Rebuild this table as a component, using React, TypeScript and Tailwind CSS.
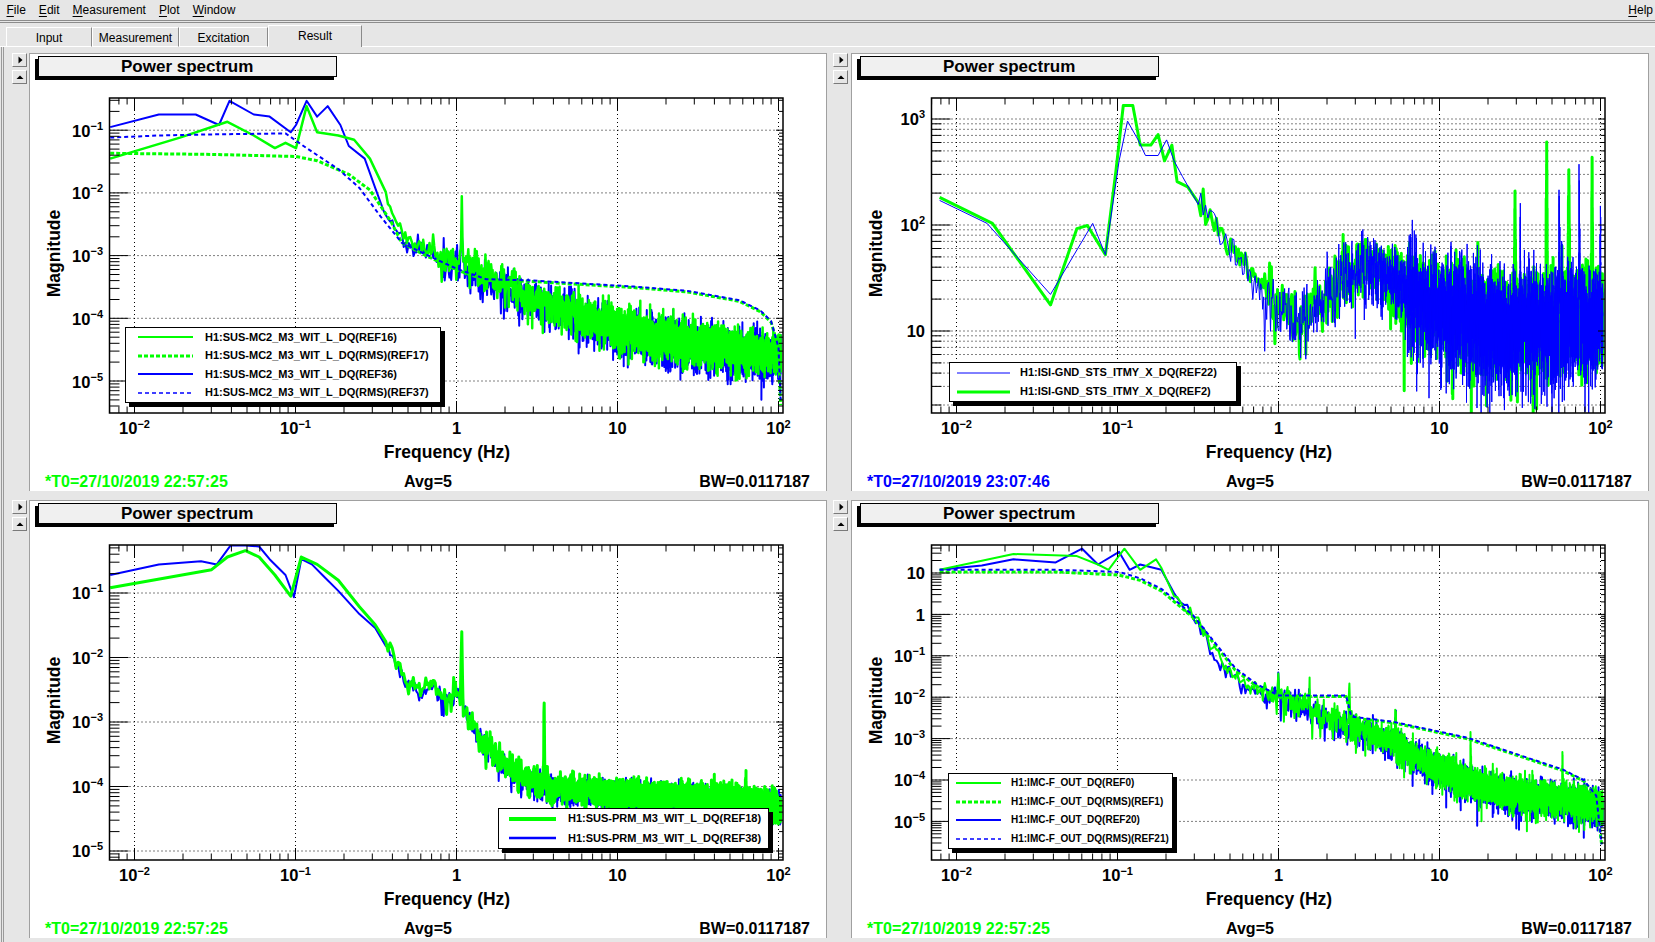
import React from "react";

type Pt = [number, number];

const FONT = "'Liberation Sans', Arial, Helvetica, sans-serif";
const GREEN = "#00ff00";
const BLUE = "#0000ff";

// frame geometry (svg coords)
const FX0 = 79.5;
const FX1 = 753;
const FY0 = 17;
const FY1 = 332;
const XMIN = -2 + (FX0 - 104.5) / 161;
const XMAX = -2 + (FX1 - 104.5) / 161;
const sx = (lf: number) => 104.5 + (lf + 2) * 161;

function rng(seed: number) {
  let s = seed >>> 0;
  return () => {
    s = (Math.imul(s, 1664525) + 1013904223) >>> 0;
    return s / 4294967296;
  };
}

function interp(pts: Pt[], x: number) {
  if (x <= pts[0][0]) return pts[0][1];
  for (let i = 1; i < pts.length; i++) {
    if (x <= pts[i][0]) {
      const [x0, y0] = pts[i - 1];
      const [x1, y1] = pts[i];
      return y0 + ((y1 - y0) * (x - x0)) / (x1 - x0 || 1);
    }
  }
  return pts[pts.length - 1][1];
}

interface NoiseOpts {
  head: Pt[];
  base: Pt[];
  sigma: (lf: number) => number;
  seed: number;
  spikes?: [number, number, number][];
  end?: number;
}

function noisy(o: NoiseOpts): Pt[] {
  const r = rng(o.seed);
  const out: Pt[] = [...o.head];
  const base: Pt[] = [o.head[o.head.length - 1], ...o.base];
  let f = Math.pow(10, base[0][0]);
  const fEnd = Math.pow(10, o.end ?? 2.015);
  const spikes = (o.spikes ?? []).map(([lf, peak, w]) => [lf, peak - interp(base, lf), w]);
  for (;;) {
    f += Math.max(0.0117187, (f * Math.LN10) / 2800);
    if (f > fEnd) break;
    const lf = Math.log10(f);
    let y = interp(base, lf);
    const s = o.sigma(lf);
    const u1 = Math.max(r(), 1e-9);
    const u2 = r();
    let g = Math.sqrt(-2 * Math.log(u1)) * Math.cos(2 * Math.PI * u2);
    if (g < 0) g *= 1.3;
    const p = r();
    if (p < 0.009) g -= 1.5 + 2 * r();
    else if (p < 0.013) g += 1 + 1.5 * r();
    y += g * s;
    for (const [slf, h, w] of spikes) {
      const d = Math.abs(lf - slf);
      if (d < w) y += h * (1 - d / w);
    }
    out.push([lf, y]);
  }
  return out;
}

// display-reading converters
const LX = (d: number) => (d - 432) / 152.5;
const RX = (d: number) => (d - 1211) / 152.5;
const yTL = (d: number) => -1 + (123 - d) / 59.75;
const yTR = (d: number) => 3 + (110 - d) / 101.5;
const yBL = (d: number) => -1 + (562 - d) / 61;
const yBR = (d: number) => 1 + (543 - d) / 39.2;
const cv = (a: number[][], fx: (n: number) => number, fy: (n: number) => number): Pt[] =>
  a.map(([x, y]) => [fx(x), fy(y)] as Pt);

interface Trace {
  color: string;
  width: number;
  dash?: string;
  pts: Pt[];
}
interface Label {
  v: number;
  main: string;
  sup?: string;
}
interface PlotSpec {
  yMin: number;
  yMax: number;
  yLabels: Label[];
  minorGridY?: boolean;
  traces: Trace[];
}

const expLabels = (ns: number[]): Label[] => ns.map((n) => ({ v: n, main: "10", sup: "\u2212" + -n }));

const xLabels: Label[] = [
  { v: -2, main: "10", sup: "\u22122" },
  { v: -1, main: "10", sup: "\u22121" },
  { v: 0, main: "1" },
  { v: 1, main: "10" },
  { v: 2, main: "10", sup: "2" },
];

/* ---------------- top-left ---------------- */
const sTLb = (lf: number) => (lf < -0.1 ? 0.06 : 0.14);
const sTLg = (lf: number) => (lf < -0.1 ? 0.06 : 0.13);
const TL: PlotSpec = {
  yMin: -5.51,
  yMax: -0.486,
  yLabels: expLabels([-1, -2, -3, -4, -5]),
  traces: [
    {
      color: BLUE,
      width: 2,
      pts: noisy({
        head: cv(
          [[104, 120], [150, 108], [185, 108], [207, 118], [217, 95], [240, 108], [255, 110], [275, 125], [280, 118], [290, 95], [300, 110], [310, 100], [322, 118], [330, 138], [345, 150], [355, 178], [363, 200]],
          LX,
          yTL
        ),
        base: cv([[375, 215], [385, 232], [400, 237], [420, 245], [432, 250], [470, 268], [500, 283], [600, 318], [700, 334], [740, 338]], LX, yTL),
        sigma: sTLb,
        seed: 11,
        spikes: [[LX(437), yTL(225), 0.006], [LX(395), yTL(215), 0.006]],
      }),
    },
    {
      color: GREEN,
      width: 2.5,
      pts: noisy({
        head: cv(
          [[104, 150], [170, 130], [215, 115], [240, 128], [260, 140], [270, 135], [280, 140], [290, 100], [300, 125], [320, 128], [335, 132], [350, 150], [365, 182]],
          LX,
          yTL
        ),
        base: cv([[375, 212], [385, 228], [400, 236], [420, 243], [432, 248], [470, 266], [500, 281], [600, 315], [700, 331], [740, 335]], LX, yTL),
        sigma: sTLg,
        seed: 23,
        spikes: [[LX(437), yTL(200), 0.008], [LX(410), yTL(222), 0.007], [LX(462), yTL(240), 0.005]],
      }),
    },
    {
      color: GREEN,
      width: 3,
      dash: "4 2",
      pts: cv(
        [[104, 145], [200, 146], [280, 148], [300, 152], [330, 165], [350, 180], [370, 210], [380, 230], [400, 241], [432, 256], [460, 266], [500, 267], [600, 273], [650, 277], [700, 286], [720, 296], [730, 306], [737, 330], [739, 385]],
        LX,
        yTL
      ),
    },
    {
      color: BLUE,
      width: 2,
      dash: "4 3",
      pts: cv(
        [[104, 130], [150, 128], [200, 127], [270, 126], [290, 140], [320, 160], [340, 178], [360, 205], [380, 230], [400, 240], [432, 255], [460, 265], [500, 266], [600, 272], [650, 276], [700, 285], [720, 295], [730, 305], [737, 330], [739, 380]],
        LX,
        yTL
      ),
    },
  ],
};

/* ---------------- top-right ---------------- */
const sTRb = (lf: number) => (lf < -0.1 ? 0.08 : lf < 0.8 ? 0.16 : 0.23);
const sTRg = (lf: number) => (lf < -0.1 ? 0.07 : lf < 0.8 ? 0.13 : 0.17);
const trBase = [[1150, 205], [1170, 235], [1190, 268], [1211, 288], [1230, 298], [1250, 285], [1270, 262], [1290, 248], [1310, 252], [1330, 270], [1350, 280], [1380, 292], [1420, 302], [1460, 300], [1500, 296], [1520, 296]];
const TR: PlotSpec = {
  yMin: 0.226,
  yMax: 3.198,
  minorGridY: true,
  yLabels: [
    { v: 3, main: "10", sup: "3" },
    { v: 2, main: "10", sup: "2" },
    { v: 1, main: "10" },
  ],
  traces: [
    {
      color: GREEN,
      width: 3,
      pts: noisy({
        head: cv(
          [[890, 185], [940, 210], [995, 288], [1020, 215], [1030, 212], [1047, 240], [1057, 160], [1064, 97], [1073, 97], [1080, 135], [1090, 135], [1097, 125], [1103, 150], [1110, 135], [1115, 170], [1125, 175], [1135, 190]],
          RX,
          yTR
        ),
        base: cv(trBase, RX, yTR),
        sigma: sTRg,
        seed: 37,
        spikes: [[RX(1465), yTR(142), 0.006], [RX(1486), yTR(160), 0.006], [RX(1508), yTR(168), 0.005], [RX(1435), yTR(195), 0.006], [RX(1400), yTR(250), 0.006], [RX(1452), yTR(370), 0.004], [RX(1330), yTR(360), 0.004]],
      }),
    },
    {
      color: BLUE,
      width: 1,
      pts: noisy({
        head: cv(
          [[890, 188], [935, 210], [995, 278], [1035, 210], [1047, 240], [1060, 150], [1068, 112], [1078, 130], [1085, 145], [1097, 145], [1105, 130], [1112, 150], [1120, 165], [1135, 192]],
          RX,
          yTR
        ),
        base: cv(trBase.map(([x, y]) => [x, y + 3]), RX, yTR),
        sigma: sTRb,
        seed: 41,
        spikes: [[RX(1477), yTR(195), 0.005], [RX(1496), yTR(200), 0.005], [RX(1516), yTR(210), 0.004], [RX(1440), yTR(225), 0.004]],
      }),
    },
  ],
};

/* ---------------- bottom-left ---------------- */
const sBL = (lf: number) => (lf < -0.1 ? 0.06 : 0.1);
const BL: PlotSpec = {
  yMin: -5.14,
  yMax: -0.256,
  yLabels: expLabels([-1, -2, -3, -4, -5]),
  traces: [
    {
      color: BLUE,
      width: 2,
      pts: noisy({
        head: cv(
          [[104, 545], [150, 535], [190, 532], [205, 535], [218, 517], [232, 517], [245, 518], [255, 530], [270, 545], [278, 566], [285, 530], [295, 535], [305, 545], [320, 560], [340, 582], [355, 595], [365, 612]],
          LX,
          yBL
        ),
        base: cv([[372, 625], [385, 648], [400, 656], [410, 648], [420, 664], [432, 660], [445, 684], [460, 708], [480, 728], [500, 740], [520, 746], [560, 751], [600, 755], [650, 758], [700, 760], [740, 764]], LX, yBL),
        sigma: sBL,
        seed: 53,
        spikes: [[LX(437), yBL(630), 0.006]],
      }),
    },
    {
      color: GREEN,
      width: 3,
      pts: noisy({
        head: cv(
          [[104, 557], [200, 540], [215, 528], [232, 522], [245, 528], [260, 545], [275, 565], [285, 528], [300, 535], [320, 550], [340, 575], [355, 592], [365, 608]],
          LX,
          yBL
        ),
        base: cv([[372, 622], [385, 645], [400, 653], [410, 645], [420, 662], [432, 656], [445, 682], [460, 705], [480, 726], [500, 738], [520, 744], [560, 749], [600, 752], [650, 755], [700, 757], [740, 762]], LX, yBL),
        sigma: sBL,
        seed: 67,
        spikes: [[LX(437), yBL(590), 0.007], [LX(515), yBL(660), 0.005], [LX(706), yBL(738), 0.004]],
      }),
    },
  ],
};

/* ---------------- bottom-right ---------------- */
const sBR = (lf: number) => (lf < -0.1 ? 0.08 : 0.165);
const brBase = [[1130, 580], [1140, 600], [1150, 620], [1170, 640], [1185, 652], [1200, 656], [1215, 660], [1230, 666], [1260, 680], [1290, 690], [1320, 702], [1340, 715], [1380, 735], [1400, 742], [1450, 753], [1500, 758], [1520, 765]];
const BR: PlotSpec = {
  yMin: -5.933,
  yMax: 1.676,
  yLabels: [{ v: 1, main: "10" }, { v: 0, main: "1" }, ...expLabels([-1, -2, -3, -4, -5])],
  traces: [
    {
      color: BLUE,
      width: 2,
      pts: noisy({
        head: cv([[890, 540], [930, 536], [960, 530], [1000, 533], [1025, 520], [1040, 535], [1060, 523], [1070, 540], [1080, 535], [1100, 540], [1112, 562]], RX, yBR),
        base: cv(brBase.map(([x, y]) => [x, y + 2]), RX, yBR),
        sigma: sBR,
        seed: 71,
        spikes: [[RX(1211), yBR(635), 0.004], [RX(1322), yBR(680), 0.004]],
      }),
    },
    {
      color: GREEN,
      width: 2,
      pts: noisy({
        head: cv([[890, 540], [960, 525], [1020, 527], [1040, 535], [1050, 540], [1065, 520], [1080, 540], [1095, 530], [1100, 538], [1112, 565]], RX, yBR),
        base: cv(brBase, RX, yBR),
        sigma: sBR,
        seed: 83,
        spikes: [[RX(1211), yBR(625), 0.006], [RX(1278), yBR(648), 0.005], [RX(1322), yBR(668), 0.005], [RX(1393), yBR(695), 0.004], [RX(1480), yBR(718), 0.004]],
      }),
    },
    {
      color: GREEN,
      width: 3,
      dash: "4 2",
      pts: cv(
        [[890, 542], [1000, 542], [1060, 545], [1080, 550], [1100, 560], [1130, 585], [1150, 610], [1170, 635], [1190, 650], [1211, 660], [1240, 660], [1275, 660], [1280, 680], [1320, 685], [1390, 700], [1420, 710], [1450, 720], [1480, 730], [1500, 740], [1512, 755], [1517, 800]],
        RX,
        yBR
      ),
    },
    {
      color: BLUE,
      width: 2,
      dash: "4 3",
      pts: cv(
        [[890, 540], [1000, 540], [1060, 542], [1080, 548], [1100, 558], [1130, 583], [1150, 608], [1170, 633], [1190, 648], [1211, 659], [1275, 659], [1280, 679], [1320, 684], [1390, 699], [1420, 709], [1450, 719], [1480, 729], [1500, 739], [1512, 754], [1517, 800]],
        RX,
        yBR
      ),
    },
  ],
};

function Plot({ id, spec }: { id: string; spec: PlotSpec }) {
  const { yMin, yMax } = spec;
  const sy = (ly: number) => FY0 + ((yMax - ly) / (yMax - yMin)) * (FY1 - FY0);

  const xMaj = [-2, -1, 0, 1, 2];
  const xMinor: number[] = [];
  for (let n = -3; n <= 2; n++)
    for (let k = 2; k <= 9; k++) {
      const v = n + Math.log10(k);
      if (v > XMIN && v < XMAX) xMinor.push(v);
    }
  const yMaj: number[] = [];
  for (let n = Math.ceil(yMin); n <= Math.floor(yMax); n++) yMaj.push(n);
  const yMinor: number[] = [];
  for (let n = Math.floor(yMin); n <= Math.ceil(yMax); n++)
    for (let k = 2; k <= 9; k++) {
      const v = n + Math.log10(k);
      if (v > yMin && v < yMax) yMinor.push(v);
    }

  let grid = "";
  xMaj.forEach((v) => (grid += `M${sx(v).toFixed(1)} ${FY0}V${FY1}`));
  yMaj.forEach((v) => (grid += `M${FX0} ${sy(v).toFixed(1)}H${FX1}`));
  if (spec.minorGridY) yMinor.forEach((v) => (grid += `M${FX0} ${sy(v).toFixed(1)}H${FX1}`));

  let ticks = "";
  xMaj.forEach((v) => {
    const x = sx(v).toFixed(1);
    ticks += `M${x} ${FY1}v-12M${x} ${FY0}v12`;
  });
  xMinor.forEach((v) => {
    const x = sx(v).toFixed(1);
    ticks += `M${x} ${FY1}v-6.5M${x} ${FY0}v6.5`;
  });
  yMaj.forEach((v) => {
    const y = sy(v).toFixed(1);
    ticks += `M${FX0} ${y}h19M${FX1} ${y}h-7`;
  });
  yMinor.forEach((v) => {
    const y = sy(v).toFixed(1);
    ticks += `M${FX0} ${y}h10M${FX1} ${y}h-4`;
  });

  const path = (pts: Pt[]) => {
    let d = "";
    pts.forEach(([lf, ly], i) => {
      d += `${i ? "L" : "M"}${sx(lf).toFixed(1)} ${sy(ly).toFixed(1)}`;
    });
    return d;
  };

  return (
    <svg className="block h-[388px] w-full" fontFamily={FONT} fontWeight="bold">
      <defs>
        <clipPath id={id}>
          <rect x={FX0} y={FY0} width={FX1 - FX0} height={FY1 - FY0} />
        </clipPath>
      </defs>
      <path d={grid} stroke="#000" strokeWidth={1} strokeDasharray="1 3" fill="none" />
      <g clipPath={`url(#${id})`} fill="none" strokeLinejoin="round">
        {spec.traces.map((t, i) => (
          <path key={i} d={path(t.pts)} stroke={t.color} strokeWidth={t.width} strokeDasharray={t.dash} />
        ))}
      </g>
      <rect x={FX0} y={FY0} width={FX1 - FX0} height={FY1 - FY0} fill="none" stroke="#000" strokeWidth={1.5} />
      <path d={ticks} stroke="#000" strokeWidth={1} fill="none" />
      {spec.yLabels.map((l) => (
        <text key={l.v} x={73} y={sy(l.v) + 6.5} textAnchor="end" fontSize={16.5} fill="#000">
          {l.main}
          {l.sup && (
            <tspan dy={-7} fontSize={11}>
              {l.sup}
            </tspan>
          )}
        </text>
      ))}
      {xLabels.map((l) => (
        <text key={l.v} x={sx(l.v)} y={353} textAnchor="middle" fontSize={16.5} fill="#000">
          {l.main}
          {l.sup && (
            <tspan dy={-6} fontSize={11}>
              {l.sup}
            </tspan>
          )}
        </text>
      ))}
      <text x={417} y={377} textAnchor="middle" fontSize={17.5} fill="#000">
        Frequency (Hz)
      </text>
      <text transform="translate(30 172.5) rotate(-90)" textAnchor="middle" fontSize={17.5} fill="#000">
        Magnitude
      </text>
    </svg>
  );
}

interface Entry {
  color: string;
  width: number;
  dash?: string;
  label: string;
}

function Legend({ pos, rowCls, lineOff, lineLen, gap, textCls, entries }: { pos: string; rowCls: string; lineOff: string; lineLen: number; gap: string; textCls: string; entries: Entry[] }) {
  return (
    <div className={`absolute border border-black bg-white shadow-[4px_4px_0_#000] ${pos}`}>
      {entries.map((e, i) => (
        <div key={i} className={`flex items-center ${rowCls}`}>
          <svg width={lineLen} height={6} className={`shrink-0 ${lineOff}`}>
            <line x1={0} y1={3} x2={lineLen} y2={3} stroke={e.color} strokeWidth={e.width} strokeDasharray={e.dash} />
          </svg>
          <span className={`whitespace-nowrap font-bold leading-none ${textCls} ${gap}`}>{e.label}</span>
        </div>
      ))}
    </div>
  );
}

function Btn({ up }: { up?: boolean }) {
  return (
    <div className="flex h-[14px] w-[15px] items-center justify-center border border-t-white border-l-white border-r-[#7a7a7a] border-b-[#7a7a7a] bg-[#e6e6e6]">
      <svg width={8} height={8}>{up ? <polygon points="0.5,6 7.5,6 4,2.5" fill="#000" /> : <polygon points="2.5,0.5 6.5,4 2.5,7.5" fill="#000" />}</svg>
    </div>
  );
}

function Canvas({ id, spec, t0, t0cls, legend }: { id: string; spec: PlotSpec; t0: string; t0cls: string; legend: React.ReactNode }) {
  return (
    <div className="relative flex h-[438px] flex-1 flex-col overflow-hidden border-x border-t border-[#a0a0a0] bg-white">
      <div className="h-[27px] pt-[2px]">
        <div className="ml-[8px] flex h-[21px] w-[299px] items-center border border-black bg-[#f0f0f0] pl-[82px] text-[17px] font-bold leading-[17px] shadow-[-3px_3px_0_#000]">
          Power spectrum
        </div>
      </div>
      <Plot id={id} spec={spec} />
      <div className="flex h-[22px] pt-[4px] text-[16px] font-bold leading-[18px] whitespace-nowrap">
        <span className={`w-[374px] pl-[15px] ${t0cls}`}>{t0}</span>
        <span>Avg=5</span>
        <span className="ml-auto pr-[16px]">BW=0.0117187</span>
      </div>
      {legend}
    </div>
  );
}

function MenuItem({ u, rest }: { u: string; rest: string }) {
  return (
    <span className="px-[6.5px]">
      <span className="underline underline-offset-[2px]">{u}</span>
      {rest}
    </span>
  );
}

export default function App() {
  return (
    <div className="h-[942px] w-[1655px] overflow-hidden bg-[#e6e6e6] text-black [font-family:'Liberation_Sans',Arial,sans-serif]">
      {/* menu bar */}
      <div className="flex h-[20px] items-center text-[12px] leading-[20px]">
        <MenuItem u="F" rest="ile" />
        <MenuItem u="E" rest="dit" />
        <MenuItem u="M" rest="easurement" />
        <MenuItem u="P" rest="lot" />
        <MenuItem u="W" rest="indow" />
        <div className="flex-1" />
        <span className="pr-[2px]">
          <span className="underline underline-offset-[2px]">H</span>elp
        </span>
      </div>
      <div className="h-[3px] border-y border-[#8c8c8c]" />
      {/* tabs */}
      <div className="flex h-[24px] items-end text-[12px]">
        <div className="h-[20px] w-[6px] border-b border-white" />
        <div className="flex h-[20px] w-[86px] justify-center border border-t-white border-l-white border-b-white border-r-[#8a8a8a] pt-[3px] leading-[15px]">Input</div>
        <div className="flex h-[20px] w-[87px] justify-center border border-t-white border-l-white border-b-white border-r-[#8a8a8a] pt-[3px] leading-[15px]">Measurement</div>
        <div className="flex h-[20px] w-[89px] justify-center border border-t-white border-l-white border-b-white border-r-[#8a8a8a] pt-[3px] leading-[15px]">Excitation</div>
        <div className="flex h-[22px] w-[94px] justify-center border-x border-t border-t-white border-l-white border-r-[#8a8a8a] pt-[2px] leading-[16px]">Result</div>
        <div className="h-[20px] flex-1 border-b border-white" />
      </div>
      {/* content frame */}
      <div className="ml-[1px] h-[895px] border-l border-[#9a9a9a]">
        <div className="ml-[1px] h-full border-l border-[#9a9a9a] pt-[6px]">
          <div className="grid grid-cols-[823px_822px] gap-y-[9px]">
            {/* top-left */}
            <div className="flex">
              <div className="flex w-[25px] flex-col gap-[3px] pl-[8px]">
                <Btn />
                <Btn up />
              </div>
              <Canvas
                id="c1"
                spec={TL}
                t0="*T0=27/10/2019 22:57:25"
                t0cls="text-[#00ff00]"
                legend={
                  <Legend
                    pos="left-[95px] top-[273px] w-[316px]"
                    rowCls="h-[18.5px]"
                    lineOff="ml-[12px]"
                    lineLen={55}
                    gap="ml-[12px]"
                    textCls="text-[11px]"
                    entries={[
                      { color: GREEN, width: 2, label: "H1:SUS-MC2_M3_WIT_L_DQ(REF16)" },
                      { color: GREEN, width: 3, dash: "4 2", label: "H1:SUS-MC2_M3_WIT_L_DQ(RMS)(REF17)" },
                      { color: BLUE, width: 2, label: "H1:SUS-MC2_M3_WIT_L_DQ(REF36)" },
                      { color: BLUE, width: 1.5, dash: "4 3", label: "H1:SUS-MC2_M3_WIT_L_DQ(RMS)(REF37)" },
                    ]}
                  />
                }
              />
            </div>
            {/* top-right */}
            <div className="flex">
              <div className="flex w-[24px] flex-col gap-[3px] pl-[6px]">
                <Btn />
                <Btn up />
              </div>
              <Canvas
                id="c2"
                spec={TR}
                t0="*T0=27/10/2019 23:07:46"
                t0cls="text-[#0000ff]"
                legend={
                  <Legend
                    pos="left-[97px] top-[308px] w-[288px]"
                    rowCls="h-[19px]"
                    lineOff="ml-[7px]"
                    lineLen={53}
                    gap="ml-[10px]"
                    textCls="text-[11px]"
                    entries={[
                      { color: BLUE, width: 1, label: "H1:ISI-GND_STS_ITMY_X_DQ(REF22)" },
                      { color: GREEN, width: 3, label: "H1:ISI-GND_STS_ITMY_X_DQ(REF2)" },
                    ]}
                  />
                }
              />
            </div>
            {/* bottom-left */}
            <div className="flex">
              <div className="flex w-[25px] flex-col gap-[3px] pl-[8px]">
                <Btn />
                <Btn up />
              </div>
              <Canvas
                id="c3"
                spec={BL}
                t0="*T0=27/10/2019 22:57:25"
                t0cls="text-[#00ff00]"
                legend={
                  <Legend
                    pos="left-[468px] top-[307px] w-[271px]"
                    rowCls="h-[19.5px]"
                    lineOff="ml-[10px]"
                    lineLen={47}
                    gap="ml-[12px]"
                    textCls="text-[11px]"
                    entries={[
                      { color: GREEN, width: 4, label: "H1:SUS-PRM_M3_WIT_L_DQ(REF18)" },
                      { color: BLUE, width: 2.5, label: "H1:SUS-PRM_M3_WIT_L_DQ(REF38)" },
                    ]}
                  />
                }
              />
            </div>
            {/* bottom-right */}
            <div className="flex">
              <div className="flex w-[24px] flex-col gap-[3px] pl-[6px]">
                <Btn />
                <Btn up />
              </div>
              <Canvas
                id="c4"
                spec={BR}
                t0="*T0=27/10/2019 22:57:25"
                t0cls="text-[#00ff00]"
                legend={
                  <Legend
                    pos="left-[96px] top-[272px] w-[225px]"
                    rowCls="h-[18.5px]"
                    lineOff="ml-[7px]"
                    lineLen={45}
                    gap="ml-[10px]"
                    textCls="text-[10px]"
                    entries={[
                      { color: GREEN, width: 2, label: "H1:IMC-F_OUT_DQ(REF0)" },
                      { color: GREEN, width: 3, dash: "4 2", label: "H1:IMC-F_OUT_DQ(RMS)(REF1)" },
                      { color: BLUE, width: 2, label: "H1:IMC-F_OUT_DQ(REF20)" },
                      { color: BLUE, width: 1.5, dash: "4 3", label: "H1:IMC-F_OUT_DQ(RMS)(REF21)" },
                    ]}
                  />
                }
              />
            </div>
          </div>
        </div>
      </div>
    </div>
  );
}
